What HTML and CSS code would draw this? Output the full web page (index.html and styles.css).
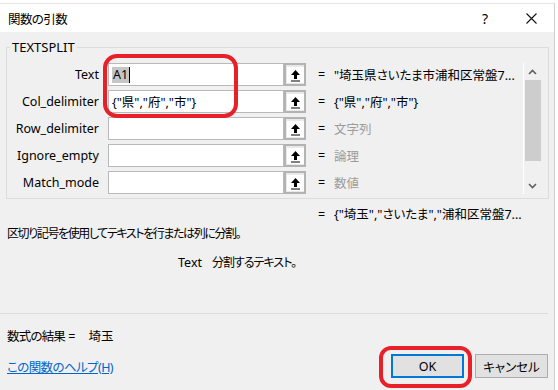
FILE: index.html
```html
<!DOCTYPE html>
<html lang="ja">
<head>
  <meta charset="UTF-8" />
  <title>関数の引数</title>
  <link rel="stylesheet" href="styles.css">
</head>
<body>
  <div class="dialog">
    <div class="titlebar">
      <span class="title">関数の引数</span>
      <span class="caption-btn">?</span>
      <span class="caption-btn">
        <svg width="11" height="11" viewBox="0 0 11 11"><path d="M0.5 0.5 L10.5 10.5 M10.5 0.5 L0.5 10.5" stroke="#111" stroke-width="1.1"/></svg>
      </span>
    </div>

    <div class="body">
      <fieldset class="group">
        <legend>TEXTSPLIT</legend>
        <div class="args">
          <div class="rows">
            <div class="row">
              <label>Text</label>
              <div class="box"><span class="sel">A1</span><span class="caret"></span></div>
              <span class="ref"><svg width="11" height="13" viewBox="0 0 11 13"><path d="M5.5 1 L1 6 H4 V10 H7 V6 H10 Z M1 11.5 H10 V12.6 H1 Z" fill="#000"/></svg></span>
              <span class="eq">=</span>
              <span class="val">"埼玉県さいたま市浦和区常盤7...</span>
            </div>
            <div class="row">
              <label>Col_delimiter</label>
              <div class="box">{"県","府","市"}</div>
              <span class="ref"><svg width="11" height="13" viewBox="0 0 11 13"><path d="M5.5 1 L1 6 H4 V10 H7 V6 H10 Z M1 11.5 H10 V12.6 H1 Z" fill="#000"/></svg></span>
              <span class="eq">=</span>
              <span class="val">{"県","府","市"}</span>
            </div>
            <div class="row">
              <label>Row_delimiter</label>
              <div class="box"></div>
              <span class="ref"><svg width="11" height="13" viewBox="0 0 11 13"><path d="M5.5 1 L1 6 H4 V10 H7 V6 H10 Z M1 11.5 H10 V12.6 H1 Z" fill="#000"/></svg></span>
              <span class="eq">=</span>
              <span class="val hint">文字列</span>
            </div>
            <div class="row">
              <label>Ignore_empty</label>
              <div class="box"></div>
              <span class="ref"><svg width="11" height="13" viewBox="0 0 11 13"><path d="M5.5 1 L1 6 H4 V10 H7 V6 H10 Z M1 11.5 H10 V12.6 H1 Z" fill="#000"/></svg></span>
              <span class="eq">=</span>
              <span class="val hint">論理</span>
            </div>
            <div class="row">
              <label>Match_mode</label>
              <div class="box"></div>
              <span class="ref"><svg width="11" height="13" viewBox="0 0 11 13"><path d="M5.5 1 L1 6 H4 V10 H7 V6 H10 Z M1 11.5 H10 V12.6 H1 Z" fill="#000"/></svg></span>
              <span class="eq">=</span>
              <span class="val hint">数値</span>
            </div>
          </div>

          <div class="scrollbar">
            <svg class="arrow" width="9" height="6" viewBox="0 0 9 6"><path d="M1 5 L4.5 1.5 L8 5" stroke="#606060" stroke-width="1.6" fill="none"/></svg>
            <div class="track"><div class="thumb"></div></div>
            <svg class="arrow" width="9" height="6" viewBox="0 0 9 6"><path d="M1 1 L4.5 4.5 L8 1" stroke="#606060" stroke-width="1.6" fill="none"/></svg>
          </div>
        </div>
      </fieldset>

      <div class="result-line">
        <span class="eq">=</span>
        <span class="val">{"埼玉","さいたま","浦和区常盤7...</span>
      </div>
      <p class="desc">区切り記号を使用してテキストを行または列に分割。</p>
      <p class="arg-help"><span class="arg-name">Text</span><span class="arg-text">分割するテキスト。</span></p>

      <div class="footer">
        <p class="formula"><span class="formula-label">数式の結果</span> =<span class="formula-val">埼玉</span></p>
        <div class="actions">
          <a class="help" href="#">この関数のヘルプ(H)</a>
          <button class="btn primary">OK</button>
          <button class="btn">キャンセル</button>
        </div>
      </div>
    </div>

    <div class="mark mark-inputs"></div>
    <div class="mark mark-ok"></div>
  </div>
</body>
</html>
```

FILE: styles.css
```css
body {
  margin: 0;
  width: 558px;
  height: 390px;
  overflow: hidden;
  background: #fff;
  font-family: "Noto Sans", "Noto Sans CJK JP", sans-serif;
  font-size: 12.5px;
  font-feature-settings: "palt";
  color: #000;
}

.dialog {
  position: relative;
  margin-top: 3px;
  width: 555px;
  height: 387px;
  border-right: 1px solid #cfcfcf;
  border-top: 1px solid #e6e6e6;
  box-sizing: border-box;
}

.titlebar {
  height: 28px;
  background: #fff;
  display: flex;
  align-items: center;
  padding-left: 8px;
}

.title {
  flex: 1;
  font-size: 12.5px;
  letter-spacing: -0.6px;
}

.caption-btn {
  width: 46px;
  height: 28px;
  display: flex;
  align-items: center;
  justify-content: center;
  font-size: 14px;
}

.body {
  background: #f0f0f0;
  height: 358px;
  padding-top: 7px;
  box-sizing: border-box;
}

.group {
  margin: 0 0 0 6px;
  width: 543px;
  box-sizing: border-box;
  border: 1px solid #dcdcdc;
  padding: 8px 7px 4px 3px;
  min-width: 0;
}

.group legend {
  padding: 0 2px;
  line-height: 16px;
  font-size: 13px;
}

.args {
  display: flex;
}

.rows {
  display: flex;
  flex-direction: column;
  gap: 4px;
  width: 513px;
}

.row {
  display: flex;
  align-items: center;
  height: 23px;
}

.row label {
  width: 89px;
  margin-right: 9px;
  text-align: right;
  white-space: nowrap;
}

.box {
  width: 176px;
  height: 23px;
  box-sizing: border-box;
  background: #fff;
  border: 1px solid #b9b9b9;
  display: flex;
  align-items: center;
  padding-left: 3px;
  white-space: nowrap;
}

.sel {
  background: #c6c6c6;
  padding: 0 1px;
  line-height: 16px;
}

.caret {
  width: 1px;
  height: 16px;
  background: #000;
}

.ref {
  width: 22px;
  height: 23px;
  box-sizing: border-box;
  border: 2px solid #b3b3b3;
  background: #e9e9e9;
  display: flex;
  align-items: center;
  justify-content: center;
}

.ref svg {
  background: #fff;
  padding: 2px 3px 1px;
}

.eq {
  width: 16px;
  margin-left: 12px;
}

.val {
  white-space: nowrap;
}

.hint {
  color: #9c9c9c;
}

.scrollbar {
  width: 17px;
  border-left: 1px solid #fff;
  display: flex;
  flex-direction: column;
  align-items: center;
  height: 131px;
}

.scrollbar .arrow {
  margin: 6px 0 5px;
}

.track {
  flex: 1;
  width: 100%;
}

.thumb {
  height: 81px;
  background: #cdcdcd;
  margin-left: 1px;
}

.result-line {
  display: flex;
  margin: 8px 0 0 306px;
  line-height: 16px;
}

.desc {
  margin: 3px 0 0 7px;
  line-height: 16px;
  font-size: 12px;
  letter-spacing: -1.4px;
}

.arg-help {
  margin: 13px 0 0 178px;
  line-height: 16px;
}

.arg-name {
  margin-right: 10px;
}

.arg-text {
  font-size: 12px;
  letter-spacing: -1px;
}

.footer {
  margin-top: 42px;
  width: 548px;
  border-top: 1px solid #dcdcdc;
}

.formula {
  margin: 15px 0 0 7px;
  line-height: 16px;
}

.formula-label {
  letter-spacing: -0.8px;
}

.formula-val {
  margin-left: 13px;
}

.actions {
  display: flex;
  align-items: center;
  margin-top: 9px;
  padding-left: 7px;
}

.help {
  flex: 1;
  color: #0066cc;
  text-decoration: underline;
  letter-spacing: -0.6px;
}

.btn {
  width: 73px;
  height: 24px;
  box-sizing: border-box;
  background: #e1e1e1;
  border: 1px solid #adadad;
  font: inherit;
  color: #000;
  padding: 0;
  margin-left: 11px;
}

.btn.primary {
  border: 2px solid #0078d7;
}

.mark {
  position: absolute;
  border: 4px solid #e8202a;
  box-sizing: border-box;
}

.mark-inputs {
  left: 103px;
  top: 50px;
  width: 135px;
  height: 64px;
  border-radius: 14px;
}

.mark-ok {
  left: 379px;
  top: 342px;
  width: 93px;
  height: 42px;
  border-radius: 12px;
}
```
